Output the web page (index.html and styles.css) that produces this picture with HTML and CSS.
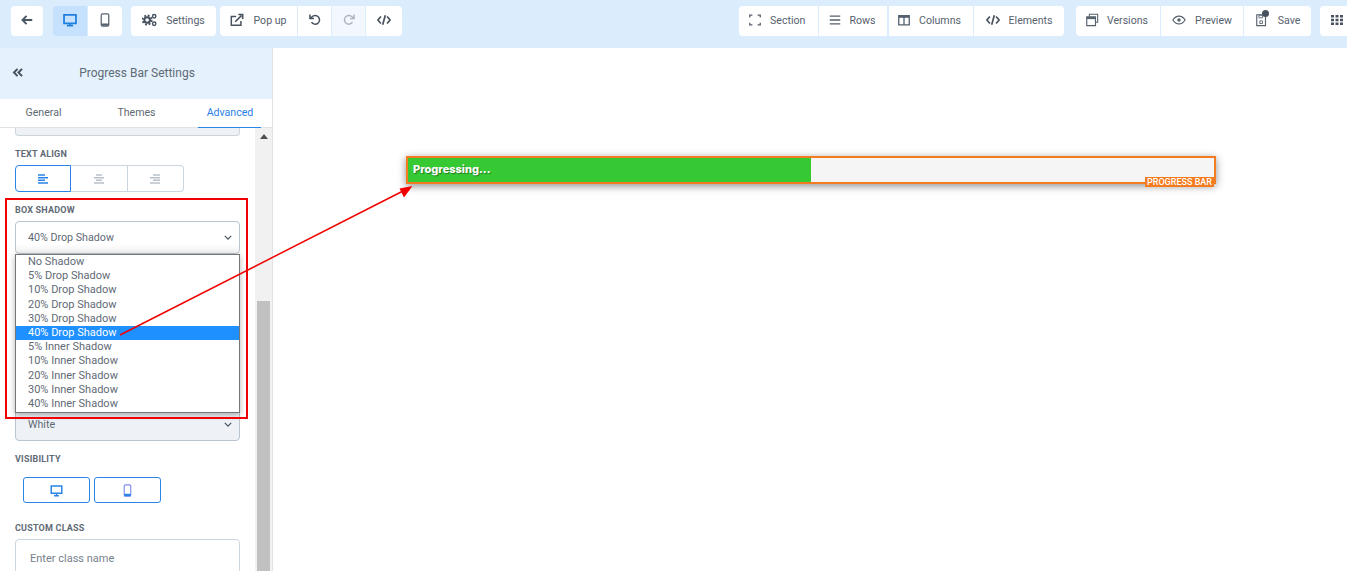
FILE: index.html
```html
<!DOCTYPE html>
<html lang="en">
<head>
<meta charset="utf-8">
<title>Progress Bar Settings</title>
<link rel="stylesheet" href="styles.css">
</head>
<body>
<header class="topbar">
  <button class="tb tb-back solo"><svg class="ic" viewBox="0 0 16 16"><path d="M14 8H3M7.5 3.2 2.8 8l4.7 4.8" fill="none" stroke="#4b5663" stroke-width="2.2"/></svg></button>
  <div class="group g-device">
    <button class="tb tb-dev active"><svg class="ic" viewBox="0 0 16 16"><path d="M1.200 2.200h13.600v9.600H1.200zM4.500 14.500h7M8 11.500v3" fill="none" stroke="#1f7fe0" stroke-width="2"/></svg></button>
    <button class="tb tb-dev"><svg class="ic" viewBox="0 0 16 16"><rect x="3.700" y="1" width="8.600" height="14" rx="1.600" fill="none" stroke="#56616e" stroke-width="1.400"/><path d="M4 12h8v2.500H4z" fill="#56616e"/></svg></button>
  </div>
  <div class="group g-set">
    <button class="tb tb-settings"><svg class="ic ic-w" viewBox="0 0 16 14"><circle cx="5.500" cy="7" r="4.800" fill="none" stroke="#47525e" stroke-width="2" stroke-dasharray="2 1.770"/><circle cx="5.500" cy="7" r="3" fill="none" stroke="#47525e" stroke-width="2.200"/><circle cx="13" cy="3" r="1.800" fill="none" stroke="#47525e" stroke-width="1.500"/><circle cx="13" cy="11" r="1.800" fill="none" stroke="#47525e" stroke-width="1.500"/></svg><span>Settings</span></button>
  </div>
  <div class="group g-tools">
    <button class="tb tb-popup"><svg class="ic" viewBox="0 0 16 16"><path d="M12.500 9v5h-11V4H7" fill="none" stroke="#47525e" stroke-width="1.700"/><path d="M6 10l7-7M9.500 1.800h5v5" fill="none" stroke="#47525e" stroke-width="1.800"/></svg><span>Pop up</span></button>
    <button class="tb tb-hist"><svg class="ic" viewBox="0 0 16 16"><path d="M4 10.500a5 5 0 1 0 .6-6.200L2.500 6.200M2.200 1.800v4.600h4.600" fill="none" stroke="#47525e" stroke-width="1.700"/></svg></button>
    <button class="tb tb-hist off"><svg class="ic" viewBox="0 0 16 16"><path d="M12 10.500a5 5 0 1 1-.6-6.200l2.100 1.900M13.800 1.800v4.600H9.200" fill="none" stroke="#aab2bb" stroke-width="1.600"/></svg></button>
    <button class="tb tb-code"><svg class="ic" viewBox="0 0 16 16"><path d="M4.500 4 1 8l3.500 4M11.500 4 15 8l-3.500 4M9.500 2.500l-3 11" fill="none" stroke="#47525e" stroke-width="1.900"/></svg></button>
  </div>
  <div class="group g-add">
    <button class="tb tb-section"><svg class="ic" viewBox="0 0 16 16"><path d="M2 5V2.500h3M11 2.500h3V5M14 11v2.500h-3M5 13.500H2V11" fill="none" stroke="#56616e" stroke-width="1.500"/></svg><span>Section</span></button>
    <button class="tb tb-rows"><svg class="ic" viewBox="0 0 16 16"><path d="M2 3.500h12M2 8h12M2 12.500h12" stroke="#56616e" stroke-width="1.500"/></svg><span>Rows</span></button>
    <button class="tb tb-cols"><svg class="ic" viewBox="0 0 16 16"><path d="M2 3h12v10.500H2zM8 3v10.500" fill="none" stroke="#56616e" stroke-width="1.500"/><path d="M2 3h12v2.500H2z" fill="#56616e"/></svg><span>Columns</span></button>
    <button class="tb tb-elems"><svg class="ic" viewBox="0 0 16 16"><path d="M4.500 4 1 8l3.500 4M11.500 4 15 8l-3.500 4M9.500 2.500l-3 11" fill="none" stroke="#47525e" stroke-width="1.900"/></svg><span>Elements</span></button>
  </div>
  <div class="group g-save">
    <button class="tb tb-vers"><svg class="ic" viewBox="0 0 16 16"><path d="M5 4V1.500h9.500v9H12" fill="none" stroke="#56616e" stroke-width="1.200"/><path d="M2 4.500h10v10H2z" fill="none" stroke="#56616e" stroke-width="1.300"/><path d="M2 4.500h10v2.500H2z" fill="#56616e"/></svg><span>Versions</span></button>
    <button class="tb tb-prev"><svg class="ic" viewBox="0 0 16 16"><path d="M1 8c2-3.200 4.300-4.500 7-4.500S13 4.800 15 8c-2 3.200-4.300 4.500-7 4.500S3 11.200 1 8z" fill="none" stroke="#56616e" stroke-width="1.300"/><circle cx="8" cy="8" r="2" fill="#56616e"/></svg><span>Preview</span></button>
    <button class="tb tb-save"><svg class="ic" viewBox="0 0 16 16"><path d="M2 2h10v12.500H2z" fill="none" stroke="#56616e" stroke-width="1.300"/><path d="M4.500 2.500h4v3h-4zM5.500 9h3v3h-3z" fill="none" stroke="#56616e"/></svg><span class="dot"></span><span>Save</span></button>
  </div>
  <button class="tb tb-apps"><svg class="ic ic-apps" viewBox="0 0 12 12"><path d="M0 1h3v2.500H0zM4.500 1h3v2.500h-3zM9 1h3v2.500H9zM0 4.800h3v2.500H0zM4.500 4.800h3v2.500h-3zM9 4.800h3v2.500H9zM0 8.500h3V11H0zM4.500 8.500h3V11h-3zM9 8.500h3V11H9z" fill="#47525e"/></svg></button>
</header>

<div class="workspace">
  <aside class="sidebar">
    <div class="side-head">
      <svg class="collapse" viewBox="0 0 12 10"><path d="M5.500 1 1.500 5l4 4M10.500 1l-4 4 4 4" fill="none" stroke="#47525e" stroke-width="2.200"/></svg>
      <h1>Progress Bar Settings</h1>
    </div>
    <nav class="tabs">
      <span class="tab t1">General</span>
      <span class="tab t2">Themes</span>
      <span class="tab t3 current">Advanced</span>
    </nav>
    <div class="side-body">
      <div class="fields">
        <div class="stub"></div>
        <div class="label l-align">TEXT ALIGN</div>
        <div class="align">
          <span class="al on"><svg viewBox="0 0 12 10"><path d="M1 1h7M1 3.700h10M1 6.300h7M1 9h10" stroke="#2a84e8" stroke-width="1.500"/></svg></span>
          <span class="al"><svg viewBox="0 0 12 10"><path d="M3 1h6M1 3.700h10M3 6.300h6M1 9h10" stroke="#b9c2cb" stroke-width="1.500"/></svg></span>
          <span class="al"><svg viewBox="0 0 12 10"><path d="M4 1h7M1 3.700h10M4 6.300h7M1 9h10" stroke="#b9c2cb" stroke-width="1.500"/></svg></span>
        </div>
        <div class="label l-shadow">BOX SHADOW</div>
        <div class="select-wrap">
          <div class="select sel-open"><span>40% Drop Shadow</span><svg class="chev" viewBox="0 0 10 6"><path d="M1 1l4 4 4-4" fill="none" stroke="#47525e" stroke-width="1.500"/></svg></div>
          <ul class="dropdown">
            <li>No Shadow</li>
            <li>5% Drop Shadow</li>
            <li>10% Drop Shadow</li>
            <li>20% Drop Shadow</li>
            <li>30% Drop Shadow</li>
            <li class="picked">40% Drop Shadow</li>
            <li>5% Inner Shadow</li>
            <li>10% Inner Shadow</li>
            <li>20% Inner Shadow</li>
            <li>30% Inner Shadow</li>
            <li>40% Inner Shadow</li>
          </ul>
        </div>
        <div class="select sel-white"><span>White</span><svg class="chev" viewBox="0 0 10 6"><path d="M1 1l4 4 4-4" fill="none" stroke="#47525e" stroke-width="1.500"/></svg></div>
        <div class="label l-vis">VISIBILITY</div>
        <div class="vis">
          <span class="vis-btn"><svg viewBox="0 0 16 16"><path d="M1.500 2.500h13v9h-13zM5 14.500h6M8 11.500v3" fill="none" stroke="#2a84e8" stroke-width="1.800"/></svg></span>
          <span class="vis-btn"><svg viewBox="0 0 16 16"><rect x="4" y="1" width="8" height="14" rx="1.600" fill="none" stroke="#7d8cf0" stroke-width="1.400"/><path d="M4 12h8v3H4z" fill="#2a84e8"/></svg></span>
        </div>
        <div class="label l-class">CUSTOM CLASS</div>
        <div class="class-input">Enter class name</div>
      </div>
      <div class="scrollbar">
        <svg class="up" viewBox="0 0 8 5"><path d="M4 0l4 5H0z" fill="#505050"/></svg>
        <div class="thumb"></div>
      </div>
    </div>
  </aside>
  <main class="canvas">
    <div class="bar">
      <div class="fill"><span>Progressing...</span></div>
      <div class="tag">PROGRESS BAR</div>
    </div>
  </main>
</div>

<div class="callout"></div>
<svg class="arrow" viewBox="0 0 1347 571"><path d="M120 335 403 191" stroke="#f00000" stroke-width="1.500" fill="none"/><path d="M412.500 186 399.500 188.500 404 197.500z" fill="#f00000"/></svg>
</body>
</html>
```
FILE: styles.css
```css
* { box-sizing: border-box; }
html, body { margin: 0; height: 571px; overflow: hidden; background: #fff; font-family: Roboto, "Liberation Sans", sans-serif; font-size: 12px; color: #56616e; }
body { position: relative; display: flex; flex-direction: column; }

.topbar { height: 48px; flex: none; background: #dbecfd; display: flex; align-items: flex-start; padding: 6px 0 0 11px; overflow: hidden; }
.group { display: flex; gap: 1px; margin-left: 10px; }
.tb { height: 30px; border: 0; background: #fff; padding: 0 0 2px; display: flex; align-items: center; justify-content: center; gap: 9px; font: 400 10.600px Roboto, sans-serif; color: #56616e; position: relative; flex: none; }
.tb span { white-space: nowrap; }
.ic { width: 14px; height: 14px; flex: none; }
.ic-w { width: 15px; }
.solo { border-radius: 4px; }
.group .tb:first-child { border-radius: 4px 0 0 4px; }
.group .tb:last-child { border-radius: 0 4px 4px 0; }
.group .tb:only-child { border-radius: 4px; }
.tb-back { width: 32px; }
.tb-dev { width: 34px; }
.tb-dev.active { background: #c5e1fd; }
.g-set { margin-left: 9px; }
.tb-settings { width: 85px; }
.g-tools { margin-left: 4px; }
.tb-popup { width: 77px; }
.tb-hist { width: 33px; }
.tb-hist.off { background: #f3f8fe; }
.tb-code { width: 36px; }
.g-add { margin-left: auto; gap: 1.500px; }
.tb-section { width: 78.500px; padding-right: 3px; gap: 8px; }
.tb-rows { width: 68px; padding-right: 3px; gap: 8px; }
.tb-cols { width: 84px; padding-right: 3px; gap: 8px; }
.tb-elems { width: 90px; }
.g-save { margin-left: 12px; }
.tb-vers { width: 84px; padding-right: 3px; gap: 8px; }
.tb-prev { width: 82px; }
.tb-save { width: 67px; }
.dot { position: absolute; left: 18px; top: 3.500px; width: 7px; height: 7px; border-radius: 50%; background: #47525e; }
.tb-apps { width: 27px; margin-left: 9px; border-radius: 4px 0 0 4px; justify-content: flex-start; padding-left: 11px; }
.ic-apps { width: 12px; height: 12px; }

.workspace { flex: 1; display: flex; min-height: 0; }
.sidebar { width: 273px; flex: none; border-right: 1px solid #dfe3e7; display: flex; flex-direction: column; min-height: 0; }
.side-head { height: 51px; flex: none; background: #e5f2fe; display: flex; align-items: center; justify-content: center; padding: 0 0 2px 2px; position: relative; }
.side-head h1 { margin: 0; font: 400 12px Roboto, sans-serif; color: #5f6a75; }
.collapse { position: absolute; left: 12px; top: 20px; width: 12px; height: 9px; }
.tabs { height: 29px; flex: none; display: flex; background: #fff; border-bottom: 1px solid #dfe3e7; }
.tab { display: flex; align-items: center; justify-content: center; height: 29px; padding-bottom: 2px; font-size: 10.600px; color: #5f6a75; }
.t1 { width: 87px; }
.t2 { width: 98px; padding-left: 1px; }
.t3 { width: 63px; margin-left: 13px; padding-left: 1px; color: #2a7fe8; border-bottom: 1px solid #2a84e8; }
.side-body { flex: 1; display: flex; min-height: 0; overflow: hidden; }
.fields { width: 255px; flex: none; padding: 0 15px; }
.stub { height: 8px; width: 225px; background: #eef2f6; border: 1px solid #ccd5de; border-top: 0; border-radius: 0 0 4px 4px; }
.label { font-weight: 700; font-size: 9px; line-height: 14px; height: 12px; color: #5f6a75; letter-spacing: .2px; }
.l-align { margin-top: 11px; }
.align { margin-top: 6px; display: flex; width: 169px; height: 27px; }
.al { width: 56.300px; border: 1px solid #ccd5de; border-left: 0; display: flex; align-items: center; justify-content: center; }
.al svg { width: 12px; height: 10px; }
.al.on { border: 1px solid #2a84e8; border-radius: 4px 0 0 4px; }
.al:last-child { border-radius: 0 4px 4px 0; }
.l-shadow { margin-top: 12px; line-height: 12px; }
.select-wrap { position: relative; margin-top: 5px; }
.select { width: 225px; height: 33px; border: 1px solid #b9c4cf; border-radius: 4px; display: flex; align-items: center; justify-content: space-between; padding: 0 7px 0 12px; font-size: 10.700px; color: #5f6a75; }
.sel-open { background: linear-gradient(#fff 70%, #f1f1f1); }
.chev { width: 8px; height: 5px; }
.sel-white { margin-top: 154px; background: #eef2f6; }
.dropdown { position: absolute; top: 33px; left: 0; width: 225px; height: 159px; margin: 0; padding: 0; list-style: none; background: #fff; border: 1px solid #767676; box-shadow: 0 2px 6px rgba(0,0,0,.3); z-index: 2; }
.dropdown li { height: 14.200px; line-height: 14.200px; padding-left: 12px; font-size: 11px; color: #5f6a75; white-space: nowrap; }
.dropdown li.picked { background: #1e90ff; color: #fff; }
.l-vis { margin-top: 12px; line-height: 12px; }
.vis { margin-top: 12px; padding-left: 8px; display: flex; gap: 4px; }
.vis-btn { width: 67px; height: 26px; border: 1px solid #2a84e8; border-radius: 3px; display: flex; align-items: center; justify-content: center; }
.vis-btn svg { width: 13px; height: 13px; }
.l-class { margin-top: 18px; }
.class-input { margin-top: 6px; width: 225px; height: 50px; border: 1px solid #ccd5de; border-radius: 4px; padding: 12px 14px 0; font-size: 11px; line-height: 14px; color: #77818c; }
.scrollbar { width: 17px; flex: none; background: #f1f1f1; display: flex; flex-direction: column; align-items: center; padding: 6px 2px 0; }
.up { width: 8px; height: 5px; flex: none; }
.thumb { width: 13px; flex: 1; background: #c1c1c1; margin-top: 162px; }

.canvas { flex: 1; padding: 108px 131px 0 133px; background: #fff; min-width: 0; }
.bar { position: relative; height: 28px; border: 2px solid #f47b20; background: #f5f5f5; box-shadow: 0 2px 8px rgba(0,0,0,.45); }
.fill { width: 50%; height: 100%; background: #36c934; display: flex; align-items: center; padding: 0 0 2px 5px; }
.fill span { font: 800 11px Inter, "Open Sans", sans-serif; color: #fff; text-shadow: 1px 1px 1px rgba(0,0,0,.4); }
.tag { position: absolute; right: 0; bottom: -5px; height: 10px; line-height: 10px; width: 69px; text-align: center; background: #f47b20; color: #fff; font-size: 9px; font-weight: 500; white-space: nowrap; overflow: hidden; }

.callout { position: absolute; left: 5px; top: 198px; width: 243px; height: 221px; border: 2px solid #f00000; pointer-events: none; z-index: 3; }
.arrow { position: absolute; left: 0; top: 0; width: 1347px; height: 571px; pointer-events: none; z-index: 4; }
```
